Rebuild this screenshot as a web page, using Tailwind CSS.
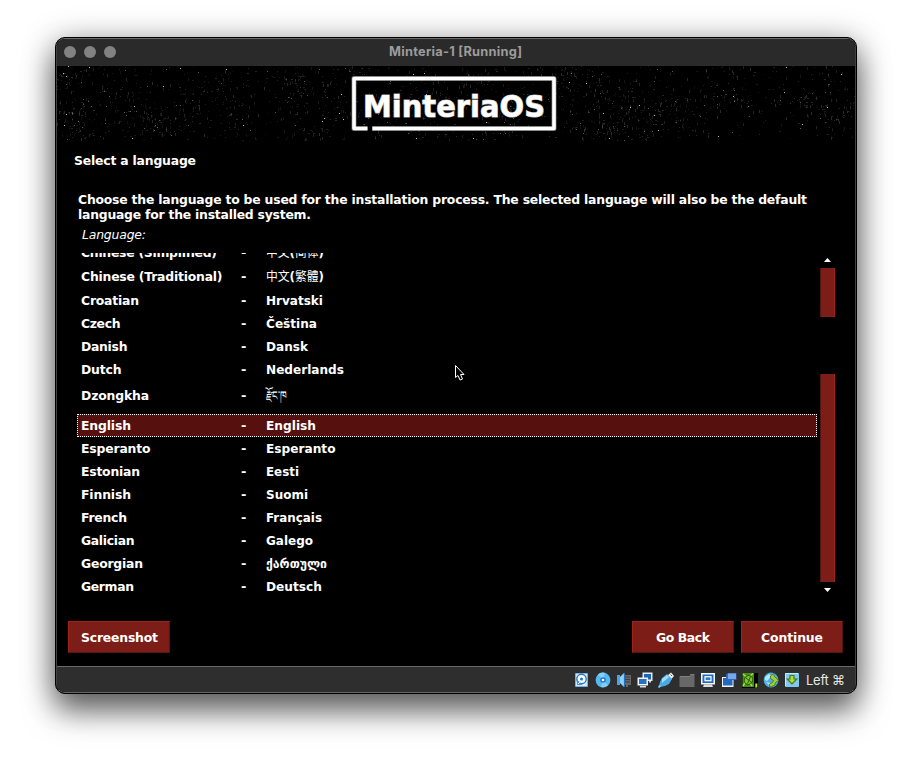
<!DOCTYPE html>
<html lang="en">
<head>
<meta charset="utf-8">
<title>Minteria-1 [Running]</title>
<script src="https://cdn.jsdelivr.net/npm/@tailwindcss/browser@4"></script>
</head>
<body class="bg-white w-[912px] h-[767px] overflow-hidden pt-[37px] pl-[55px]">
<div class="w-[802px] h-[657px] rounded-[10px] border border-black bg-black shadow-[0_18px_30px_rgba(0,0,0,0.5),0_4px_32px_rgba(0,0,0,0.36)]">
<div class="w-[800px] h-[655px] rounded-[9px] border border-[#424242] border-t-[#6c6c6c] border-b-[#666] overflow-hidden flex flex-col text-white font-bold text-[12.4px] font-['DejaVu_Sans','Noto_Sans_CJK_SC',sans-serif]">

  <header class="h-[27px] shrink-0 bg-[#2a2a2a] relative flex items-center pl-[7px] pb-[1px] gap-[8px]">
    <i class="size-3 rounded-full bg-[#828282]"></i><i class="size-3 rounded-full bg-[#828282]"></i><i class="size-3 rounded-full bg-[#828282]"></i>
    <svg class="absolute left-0 top-0" width="798" height="27"><text x="332" y="17" textLength="133" font-family="Inter, sans-serif" font-size="12.8" font-weight="700" fill="#9c9c9c">Minteria-1 [Running]</text></svg>
  </header>

  <section class="h-[75px] shrink-0">
    <svg width="798" height="75" viewBox="0 0 798 75">
      <g id="stars"></g>
      <path d="M315 62.500H497V12.500H297V62.500H310.500" fill="none" stroke="#666" stroke-width="5" stroke-linejoin="round"/>
      <path d="M315.500 62.500H497V12.500H297V62.500H310.500" fill="none" stroke="#fff" stroke-width="3.600" stroke-linejoin="round"/>
      <text x="306" y="50.500" textLength="182" lengthAdjust="spacingAndGlyphs" font-family="DejaVu Sans" font-size="30" font-weight="700" fill="#fff" stroke="#aaa" stroke-width="1.200" paint-order="stroke">MinteriaOS</text>
    </svg>
  </section>

  <main class="grow flex flex-col min-h-0">
    <h1 class="h-[19px] mt-[10px] leading-[19px] pl-[17px]"><svg class="block overflow-visible" width="300" height="19"><text y="14" textLength="122">Select a language</text></svg></h1>
    <div class="mt-[21px] pl-[21px] h-[32px]"><svg class="block overflow-visible" width="740" height="32"><text y="13" textLength="729">Choose the language to be used for the installation process. The selected language will also be the default</text><text y="28" textLength="233">language for the installed system.</text></svg></div>
    <div class="pl-[24px] h-[20px] mt-[4px] font-normal italic"><svg class="block overflow-visible" width="100" height="18"><text x="1" y="12" textLength="64">Language:</text></svg></div>
    <div class="flex h-[346px] mt-[6px] pl-[20px]">
      <div id="list" class="w-[740px] h-[346px] overflow-hidden"></div>
      <div class="ml-[3px] w-[15px] flex flex-col items-center">
        <svg class="mt-[5px] block" width="15" height="4"><path d="M4 4h7L7.500 0z" fill="#fff"/></svg>
        <div class="mt-[6px] w-[15px] h-[49px] bg-[#7c1d17] border-l border-l-[#541410] border-r border-r-[#a1221c]"></div>
        <div class="mt-[57px] w-[15px] h-[208px] bg-[#7c1d17] border-l border-l-[#541410] border-r border-r-[#a1221c]"></div>
        <svg class="mt-[6px] block" width="15" height="4"><path d="M4 0h7L7.500 4z" fill="#fff"/></svg>
      </div>
    </div>
    <div class="flex mt-[22px] pl-[11px] pr-[12px] h-[32px]">
      <button class="w-[102px] h-[32px] bg-[#7c1d17] border border-t-[#a1221c] border-l-[#a1221c] border-r-[#541410] border-b-[#541410]"><svg class="block" width="100" height="30"><text x="12" y="20" textLength="77">Screenshot</text></svg></button>
      <button class="ml-auto w-[102px] h-[32px] bg-[#7c1d17] border border-t-[#a1221c] border-l-[#a1221c] border-r-[#541410] border-b-[#541410]"><svg class="block" width="100" height="30"><text x="23" y="20" textLength="54">Go Back</text></svg></button>
      <button class="ml-[7px] w-[102px] h-[32px] bg-[#7c1d17] border border-t-[#a1221c] border-l-[#a1221c] border-r-[#541410] border-b-[#541410]"><svg class="block" width="100" height="30"><text x="19" y="20" textLength="62">Continue</text></svg></button>
    </div>
  </main>

  <footer class="h-[26px] shrink-0 bg-[#2e2e2e] border-t border-t-[#686868] flex items-center pl-[516px] pt-[1px] gap-[5px]">
    <svg class="size-4" viewBox="0 0 16 16"><rect x="2" y="1" width="13" height="14" fill="#2c76bd"/><rect x="2.500" y="1.500" width="12" height="13" fill="#c9ebfc"/><circle cx="8.500" cy="7" r="4.700" fill="#fff" stroke="#2775c3" stroke-width="1.400"/><circle cx="8.500" cy="7" r="1.500" fill="#2775c3"/><path d="M4 8v5h5l-2-3z" fill="#3c94dc"/><path d="M5 12l3-3M10 13h2" stroke="#fff"/></svg>
    <svg class="size-4 ml-[1px]" viewBox="0 0 16 16"><circle cx="8" cy="8" r="7.400" fill="#56b9f3"/><path d="M8 8L3 2.500A7 7 0 0 1 10 1zM8 8l5 5a7 7 0 0 1-7 2z" fill="#84cffa"/><circle cx="8" cy="8" r="2.800" fill="#207bc5"/><circle cx="8" cy="8" r="1.300" fill="#fff"/></svg>
    <svg class="size-4" viewBox="0 0 16 16"><path d="M8 3h7v10H8z" fill="#666"/><path d="M9 5h5M9 7.500h5M9 10h5" stroke="#3e3e3e"/><path d="M1 3h3v10H1z" fill="#4aa5e5"/><path d="M4 5l4-4v14l-4-4z" fill="#8bd0fa"/><path d="M8.500 1v14" stroke="#266cb2" stroke-width="1.200"/><path d="M11 13v2" stroke="#999"/></svg>
    <svg class="size-4" viewBox="0 0 16 16"><path d="M5.500 0.500H15.500V9H5.500z" fill="#e4eef7"/><path d="M7 2h7v5.500H7z" fill="#1d65b9"/><path d="M0.500 5.500H11v8H0.500z" fill="#eef5fb"/><path d="M2 7h7.500v5H2z" fill="#2870c2"/><path d="M3 14h6v1.500H3zM12 9h2v1.500h-2z" fill="#d1dbe4"/></svg>
    <svg class="size-4" viewBox="0 0 16 16"><path d="M9 4l4-3.500 3 3.500-3 3.500z" fill="#f0f0f0"/><path d="M12.500 2.500l1.500 1.500" stroke="#555"/><path d="M4 6l5-4 5 5-3 5-4 2-5 1-1-1 1-4z" fill="#4ba8e5"/><path d="M4 7l5-4 2 2-7 6z" fill="#a0dcff"/><path d="M2.500 13.500l-2 2" stroke="#7bc9f8" stroke-width="1.800"/></svg>
    <svg class="size-4" viewBox="0 0 16 16"><path d="M0.500 4h10l1-2h4v13h-15z" fill="#686868"/><path d="M1 4.500h10M11.500 2.500h3.500" stroke="#808080"/></svg>
    <svg class="size-4" viewBox="0 0 16 16"><rect x="1" y="1" width="14" height="11.500" fill="#f2f6fa"/><rect x="2.500" y="2.500" width="11" height="8.500" fill="#226bc0"/><rect x="5" y="4.700" width="6" height="4" fill="#2d7acc" stroke="#fff" stroke-width="1.200"/><path d="M4 12.500h8l1 2.500H3z" fill="#ddd"/></svg>
    <svg class="size-4" viewBox="0 0 16 16"><path d="M1 5h11.500v10H1z" fill="#edf5fb"/><path d="M2 6h9.500v7.500H2z" fill="#2469bd"/><path d="M5 2.500l2-1.500h8.500v7H5z" fill="#3469ba"/><path d="M7 1.500h8V7H7z" fill="#76a7ea"/></svg>
    <svg class="size-4" viewBox="0 0 16 16"><path d="M0 1h16v15H0z" fill="#000"/><path d="M0.500 1h11.500v14H0.500z" fill="#4a8d18"/><path d="M1 2l3.500 3M8 4l3-2.500M1 14l2.500-4M10 14l-2-3" fill="none" stroke="#a0df40" stroke-width="1.600"/><ellipse cx="6.500" cy="8" rx="4" ry="4.500" fill="#7dc22f" stroke="#255f0b" transform="rotate(30 6.500 8)"/><path d="M4 6l5 4M8.500 4.500l-3 7" stroke="#275e0b"/><path d="M13.300 11.500h2v4h-2z" fill="#b3f000"/></svg>
    <svg class="size-4" viewBox="0 0 16 16"><circle cx="8" cy="8" r="7.400" fill="#4dacea"/><path d="M2 5l4-3 2 2-2 3-2 2-2-1zM3 10l4 1v3z" fill="#b5e7ff"/><path d="M7.500 4l3-2.500 1 3 4 4-3 2-1 3-5 1.500v-3l3-1.500 1-2-3-2z" fill="#a3cf31" stroke="#487d13" stroke-width=".9"/></svg>
    <svg class="size-4" viewBox="0 0 16 16"><rect x="1" y="1" width="14" height="14" rx="1" fill="#7fc8ef"/><path d="M1.500 14V1.500H14" stroke="#bdecff" fill="none"/><path d="M6 3.500h4v3.500h2.800l-4.800 5-4.800-5H6z" fill="#b1da3d" stroke="#477912" stroke-width="1.200"/></svg>
    <svg class="block" width="44" height="20"><text x="1" y="15" textLength="39" font-family="Inter, 'DejaVu Sans', sans-serif" font-size="13" font-weight="400" fill="#e5e5e5">Left ⌘</text></svg>
  </footer>
</div>
</div>

<svg class="absolute left-[454px] top-[364px]" width="12" height="18" viewBox="0 0 12 18"><path d="M1.500 1.500v12l2.500-2 2 4.500 2.500-1-2-4.500h3.500z" fill="#000" stroke="#fff" stroke-width="1"/></svg>

<script>
// name, native name, row height, baseline, name width, native width
const rows = [
 ['Chinese (Simplified)','<tspan font-weight="400">中文</tspan>(<tspan font-weight="400">简体</tspan>)',11,4,136,58],
 ['Chinese (Traditional)','<tspan font-weight="400">中文</tspan>(<tspan font-weight="400">繁體</tspan>)',25,17,141.5,58],
 ['Croatian','Hrvatski',23,16,58,57],
 ['Czech','Čeština',23,16,39.5,51],
 ['Danish','Dansk',23,16,46.500,42],
 ['Dutch','Nederlands',23,16,40.500,78],
 ['Dzongkha','རྫོང་ཁ',33,19,68,21],
 ['English','English',23,16,50,50],
 ['Esperanto','Esperanto',23,16,69.5,69.5],
 ['Estonian','Eesti',23,16,59,33],
 ['Finnish','Suomi',23,16,50,42],
 ['French','Français',23,16,46,56],
 ['Galician','Galego',23,16,53.5,47],
 ['Georgian','ქართული',23,16,62,61],
 ['German','Deutsch',23,16,53,56]];
document.getElementById('list').innerHTML = rows.map(([a,b,h,y,w,v]) =>
 `<div class="${a==='English' ? 'bg-[#56110e] outline-1 -outline-offset-1 outline-dotted outline-white' : ''}"><svg class="block" width="740" height="${h}"><text x="4" y="${y}" textLength="${w}">${a}</text><text x="164" y="${y}" font-size="13">-</text><text x="189" y="${y}" textLength="${v}" lengthAdjust="spacingAndGlyphs" ${a==='Dzongkha' ? 'font-weight="400"' : ''}>${b}</text></svg></div>`).join('');
// seeded star field
let s = 77;
const r = () => (s = (s * 16807) % 2147483647) / 2147483647;
let out = '';
const clusters = Array.from({length: 75}, () => [r()*798, r()*74]);
for (let i = 0; i < 2000; i++) {
  const c = clusters[Math.floor(r()*75)], near = r() < .6;
  const x = Math.floor(near ? c[0] + (r()+r()-1)*24 : r()*798), y = Math.floor(near ? c[1] + (r()+r()-1)*18 : r()*74);
  const k = r(), o = k > .985 ? .75 : k > .92 ? .35 : .05 + r()*.12, t = r();
  if (y >= 0 && y < 75) out += `<rect x="${x}" y="${y}" width="${k < .9 && t > .8 ? 2 : 1}" height="${k < .9 && t < .25 ? 3 : 1}" fill="#fff" opacity="${o.toFixed(2)}"/>`;
}
document.getElementById('stars').innerHTML = out;
document.querySelectorAll('svg text').forEach(t => { if (!t.getAttribute('fill')) t.setAttribute('fill', '#fff'); });
</script>
</body>
</html>
